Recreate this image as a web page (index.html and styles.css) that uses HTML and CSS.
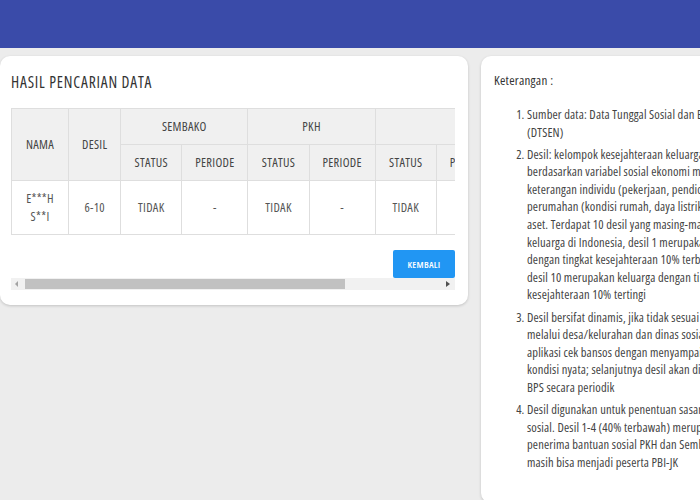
FILE: index.html
```html
<!DOCTYPE html>
<html lang="id">
  <head>
    <meta charset="UTF-8" />
    <meta name="viewport" content="width=device-width, initial-scale=1.0" />
    <title>Hasil Pencarian Data</title>

    <link rel="stylesheet" href="styles.css">
  </head>

  <body>
    <!-- top bar -->
    <div class="topbar"></div>

    <div class="main">
      <!-- hasil pencarian -->
      <div class="card result-card">
        <h2 class="card-title">HASIL PENCARIAN DATA</h2>

        <div class="table-wrap">
          <table class="result-table">
            <colgroup>
              <col class="col-nama" />
              <col class="col-desil" />
              <col class="col-status" />
              <col class="col-periode" />
              <col class="col-status" />
              <col class="col-periode" />
              <col class="col-status" />
              <col class="col-periode" />
            </colgroup>
            <thead>
              <tr>
                <th rowspan="2">NAMA</th>
                <th rowspan="2">DESIL</th>
                <th colspan="2">SEMBAKO</th>
                <th colspan="2">PKH</th>
                <th colspan="2"></th>
              </tr>
              <tr>
                <th>STATUS</th>
                <th>PERIODE</th>
                <th>STATUS</th>
                <th>PERIODE</th>
                <th>STATUS</th>
                <th>PERIODE</th>
              </tr>
            </thead>
            <tbody>
              <tr>
                <td>E***H<br />S**I</td>
                <td>6-10</td>
                <td>TIDAK</td>
                <td>-</td>
                <td>TIDAK</td>
                <td>-</td>
                <td>TIDAK</td>
                <td>-</td>
              </tr>
            </tbody>
          </table>
        </div>

        <div class="actions">
          <button class="btn-back">KEMBALI</button>
        </div>

        <!-- horizontal scrollbar of the table -->
        <div class="scrollbar">
          <span class="arrow arrow-left"></span>
          <div class="thumb"></div>
          <span class="arrow arrow-right"></span>
        </div>
      </div>

      <!-- keterangan -->
      <div class="card info-card">
        <p class="info-title">Keterangan :</p>
        <ol class="info-list">
          <li>Sumber data: Data Tunggal Sosial dan Ekonomi Nasional<br />(DTSEN)</li>
          <li>
            Desil: kelompok kesejahteraan keluarga yang dihitung<br />
            berdasarkan variabel sosial ekonomi meliputi<br />
            keterangan individu (pekerjaan, pendidikan),<br />
            perumahan (kondisi rumah, daya listrik) dan kepemilikan<br />
            aset. Terdapat 10 desil yang masing-masing berisi 10%<br />
            keluarga di Indonesia, desil 1 merupakan keluarga<br />
            dengan tingkat kesejahteraan 10% terbawah, sedangkan<br />
            desil 10 merupakan keluarga dengan tingkat<br />
            kesejahteraan 10% tertingi
          </li>
          <li>
            Desil bersifat dinamis, jika tidak sesuai dapat diusulkan<br />
            melalui desa/kelurahan dan dinas sosial atau melalui<br />
            aplikasi cek bansos dengan menyampaikan<br />
            kondisi nyata; selanjutnya desil akan dihitung ulang oleh<br />
            BPS secara periodik
          </li>
          <li>
            Desil digunakan untuk penentuan sasaran program bantuan<br />
            sosial. Desil 1-4 (40% terbawah) merupakan calon<br />
            penerima bantuan sosial PKH dan Sembako, desil 5<br />
            masih bisa menjadi peserta PBI-JK
          </li>
        </ol>
      </div>
    </div>
  </body>
</html>
```

FILE: styles.css
```css
body {
  margin: 0;
  background-color: #ececec;
  font-family: "Open Sans", Lato, sans-serif;
  font-stretch: 75%;
  color: #444;
  overflow: hidden;
}

.topbar {
  height: 48px;
  background-color: #3a4ba9;
}

.main {
  display: grid;
  grid-template-columns: 468px 240px;
  gap: 13px;
  width: 730px;
  padding-top: 8px;
  align-items: start;
}

.card {
  background-color: #fff;
  border-radius: 10px;
  box-shadow: 0 1px 3px rgba(0, 0, 0, 0.18);
}

/* left card */
.result-card {
  padding: 16px 13px 15px 11px;
}

.card-title {
  margin: 0 0 16px;
  font-size: 15.5px;
  font-weight: 400;
  letter-spacing: 0.8px;
  line-height: 20px;
  color: #333;
}

.table-wrap {
  width: 444px;
  overflow: hidden;
}

.result-table {
  table-layout: fixed;
  width: 492px;
  border-collapse: collapse;
  font-size: 12.5px;
  letter-spacing: 0.3px;
  color: #555;
  white-space: nowrap;
}

.result-table th,
.result-table td {
  border: 1px solid #dedede;
  text-align: center;
  padding: 0;
  overflow: hidden;
}

.result-table th {
  background-color: #f0f0f0;
  font-weight: 400;
  color: #444;
  height: 35px;
}

.result-table td {
  height: 53px;
  line-height: 18px;
}

.col-nama {
  width: 57px;
}

.col-desil {
  width: 52px;
}

.col-status {
  width: 61px;
}

.col-periode {
  width: 66px;
}

.actions {
  display: flex;
  justify-content: flex-end;
  margin-top: 15px;
}

.btn-back {
  width: 62px;
  height: 28px;
  border: none;
  border-radius: 2px;
  background-color: #2196f3;
  color: #fff;
  font-family: inherit;
  font-stretch: inherit;
  font-size: 9.5px;
  font-weight: 600;
  letter-spacing: 0.3px;
  padding: 0;
}

.scrollbar {
  display: flex;
  align-items: center;
  height: 12px;
  width: 444px;
  background-color: #f1f1f1;
}

.thumb {
  width: 320px;
  height: 10px;
  margin-left: 2px;
  background-color: #c1c1c1;
}

.arrow {
  width: 0;
  height: 0;
  border-top: 3px solid transparent;
  border-bottom: 3px solid transparent;
}

.arrow-left {
  margin-left: 4px;
  border-right: 3px solid #a3a3a3;
  margin-right: 5px;
}

.arrow-right {
  margin-left: auto;
  margin-right: 5px;
  border-left: 4px solid #505050;
}

/* right card */
.info-card {
  padding: 15px 0 27px 13px;
  white-space: nowrap;
  overflow: hidden;
  font-size: 12.5px;
  letter-spacing: 0.15px;
  color: #444;
}

.info-title {
  margin: 0 0 17px;
  font-size: 13px;
  letter-spacing: 0.25px;
  line-height: 18px;
  color: #333;
}

.info-list {
  margin: 0;
  padding-left: 33px;
  line-height: 17.6px;
}

.info-list li {
  margin-bottom: 4.5px;
}
```
